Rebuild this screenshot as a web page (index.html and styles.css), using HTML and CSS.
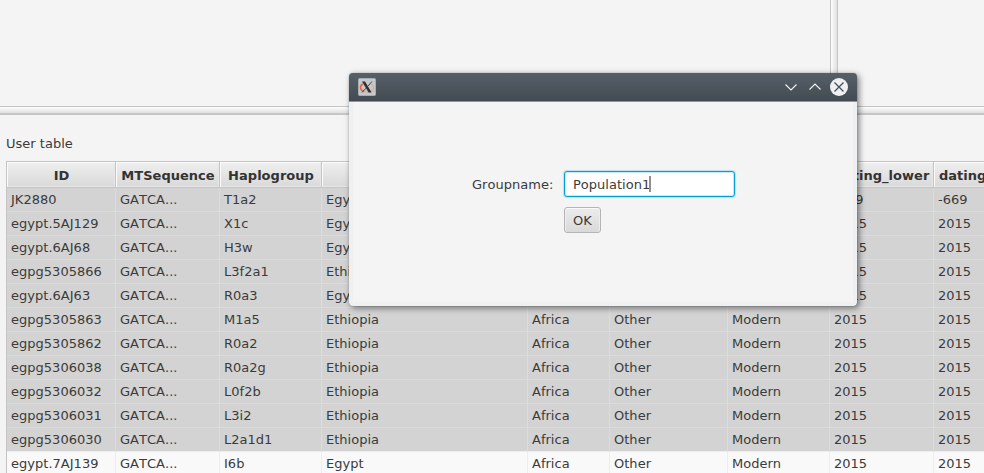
FILE: index.html
```html
<!DOCTYPE html>
<html lang="en">
<head>
<meta charset="utf-8">
<title>User table</title>
<link rel="stylesheet" href="styles.css">
</head>
<body>
<div class="app">
  <div class="panes"><div class="pane"></div><div class="split-v"></div><div class="pane-right"></div></div>
  <div class="split-h"></div>
  <div class="caption">User table</div>
  <div class="table" id="table">
    <div class="row head"><div>ID</div><div>MTSequence</div><div>Haplogroup</div><div></div><div></div><div></div><div></div><div>dating_lower</div><div class="clip">dating_upper</div></div>
  </div>
</div>
<div class="dialog">
  <div class="titlebar">
    <svg class="logo" width="18" height="18" viewBox="0 0 18 18">
      <rect x=".5" y=".5" width="17" height="17" rx="1" fill="#c3c9cc" stroke="#a6adb1"/>
      <path d="M5 6C1.500 7.500 1.500 12 6 13.500" fill="none" stroke="#ee6338" stroke-width="1.500"/>
      <path d="M6 13.500C10 14.800 15 13.500 15.600 10.500C15.900 8.500 15 7 12.500 6" fill="none" stroke="#e6a878" stroke-width="1.200"/>
      <path d="M4 3.500H7L13.600 14.500H10.600Z" fill="#2c3135"/>
      <path d="M14 3.500L9.600 8.400M8 10.200L4 14.500" stroke="#3d4347" stroke-width="1"/>
    </svg>
    <svg class="controls" width="68" height="20" viewBox="0 0 68 20" fill="none">
      <path d="M5.500 7.500L11 13L16.500 7.500M29.500 12.500L35 7L40.500 12.500" stroke="#eff0f1" stroke-width="1.200"/>
      <circle cx="59" cy="10" r="9" fill="#eff0f1"/>
      <path d="M54.500 5.500L63.500 14.500M63.500 5.500L54.500 14.500" stroke="#475057" stroke-width="1.300"/>
    </svg>
  </div>
  <div class="body">
    <div class="form">
      <label>Groupname:</label>
      <div class="field">Population1<span class="caret"></span></div>
      <div class="ok">OK</div>
    </div>
  </div>
</div>
<script src="table.js"></script>
</body>
</html>
```
FILE: styles.css
```css
* { box-sizing: border-box; }
body { margin: 0; width: 984px; height: 473px; overflow: hidden; background: #f4f4f4; color: #3b3b3b; font: 13px "DejaVu Sans", sans-serif; font-kerning: none; letter-spacing: .02px; }
.app { height: 473px; overflow: hidden; display: flex; flex-direction: column; }
.panes { display: flex; height: 106px; flex: none; }
.pane { width: 830px; }
.split-v { width: 8px; border-left: 1px solid #c6c6c6; border-right: 1px solid #c6c6c6; background: linear-gradient(90deg, #fdfdfd, #e0e0e0); }
.split-h { height: 9px; flex: none; border-top: 1px solid #c4c4c4; border-bottom: 2px solid #c6c6c6; background: linear-gradient(#fdfdfd, #e0e0e0); }
.caption { margin: 20px 0 0 6px; height: 26px; line-height: 17px; flex: none; }
.table { margin-left: 6px; width: 1040px; flex: none; border: 1px solid #c4c4c4; border-bottom: 0; }
.row { display: grid; grid-template-columns: 109px 104px 102px 206px 82px 118px 102px 104px 112px; height: 24px; background: #f9f9f9; line-height: 23px; }
.row > div { padding-left: 4px; border-right: 1px solid #ededed; border-bottom: 1px solid #ededed; white-space: nowrap; overflow: hidden; }
.row.selected { background: #d3d3d3; }
.row.selected > div { border-color: #dcdcdc; }
.row.last > div { border-bottom-color: #ededed; }
.row.head { height: 26px; line-height: 27px; font-weight: bold; color: #333; text-align: center; background: none; }
.row.head > div { padding: 0 0 0 1px; border-right: 1px solid #c4c4c4; border-bottom: 1px solid #c4c4c4; background: linear-gradient(#efefef, #d9d9d9); box-shadow: inset 1px 1px #fbfbfb, inset -1px -1px #e7e7e7; }
.row.head .clip { text-align: left; padding-left: 5px; }
.dialog { position: absolute; left: 349px; top: 73px; width: 508px; height: 233px; border-radius: 4px; background: #eff0f1; box-shadow: 0 0 1px rgba(0,0,0,.45), 2px 2px 6px rgba(0,0,0,.5); }
.titlebar { display: flex; justify-content: space-between; height: 29px; border-radius: 4px 4px 0 0; border-bottom: 1px solid #3daee9; background: linear-gradient(#566068, #434b52); }
.logo { margin: 5px 0 0 9px; }
.controls { margin: 4px 9px 0 0; }
.body { margin: 0 4px; height: 200px; background: #f4f4f4; display: flex; justify-content: center; align-items: flex-start; padding-top: 69px; }
.form { display: grid; grid-template-columns: 81px 171px; column-gap: 11px; row-gap: 10px; padding-left: 1px; }
.form label { line-height: 27px; white-space: nowrap; }
.field { height: 26px; width: 171px; display: flex; align-items: center; padding-left: 8px; border: 1px solid #039ed3; border-radius: 3px; background: #fff; box-shadow: 0 0 1px 1px #b5e2f1, inset 0 0 1px 1px #c3e8f4; }
.caret { width: 2px; height: 16px; margin-left: -1px; background: #8f8f8f; }
.ok { grid-column: 2; margin-top: -1px; width: 37px; height: 26px; border: 1px solid #b5b5b5; border-radius: 3px; line-height: 25px; text-align: center; background: linear-gradient(#ececec, #d9d9d9); box-shadow: inset 0 1px #f8f8f8, inset 1px 0 #ededed, inset -1px 0 #ededed; }
```
FILE: table.js
```js
const rows = [
  ["JK2880", "T1a2", "Egypt", "-669"],
  ["egypt.5AJ129", "X1c", "Egypt", "2015"],
  ["egypt.6AJ68", "H3w", "Egypt", "2015"],
  ["egpg5305866", "L3f2a1", "Ethiopia", "2015"],
  ["egypt.6AJ63", "R0a3", "Egypt", "2015"],
  ["egpg5305863", "M1a5", "Ethiopia", "2015"],
  ["egpg5305862", "R0a2", "Ethiopia", "2015"],
  ["egpg5306038", "R0a2g", "Ethiopia", "2015"],
  ["egpg5306032", "L0f2b", "Ethiopia", "2015"],
  ["egpg5306031", "L3i2", "Ethiopia", "2015"],
  ["egpg5306030", "L2a1d1", "Ethiopia", "2015"],
  ["egypt.7AJ139", "I6b", "Egypt", "2015"]
];
const table = document.getElementById("table");
rows.forEach(([id, group, country, year], i) => {
  const row = document.createElement("div");
  row.className = "row" + (i < 11 ? " selected" : "") + (i === 10 ? " last" : "");
  const era = i === 0 ? "Ancient" : "Modern";
  [id, "GATCA...", group, country, "Africa", "Other", era, year, year].forEach(text => {
    const cell = document.createElement("div");
    cell.textContent = text;
    row.appendChild(cell);
  });
  table.appendChild(row);
});
```
